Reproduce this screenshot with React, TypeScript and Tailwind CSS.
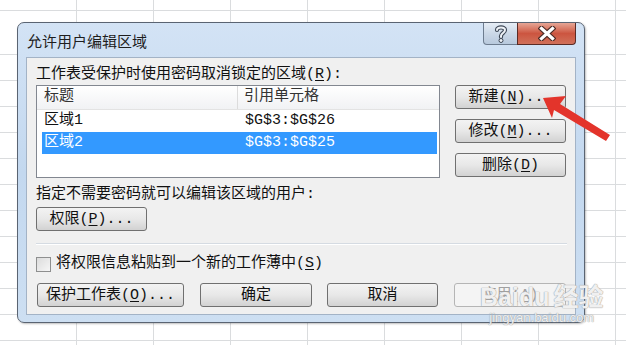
import React from 'react';

const cjk = "font-['Liberation_Mono','Noto_Sans_CJK_SC',monospace]";

function Btn({ children, w, disabled }: { children: React.ReactNode; w: string; disabled?: boolean }) {
  return (
    <div
      className={`${w} h-[24px] shrink-0 rounded-[3px] border flex items-center justify-center text-[15px] leading-none ${
        disabled
          ? 'border-[#b5b5b5] bg-[#f4f4f4] text-[#a0a0a0]'
          : 'border-[#707070] bg-gradient-to-b from-[#f3f3f3] via-[#e8e8e8] to-[#d2d2d2] text-[#111]'
      }`}
    >
      {children}
    </div>
  );
}

const U = ({ c }: { c: string }) => <span className="underline underline-offset-2">{c}</span>;

export default function App() {
  const cols = Array.from({ length: 9 });
  const rows = Array.from({ length: 12 });

  return (
    <div className={`relative w-[626px] h-[345px] overflow-hidden bg-white ${cjk}`}>
      {/* spreadsheet grid behind the dialog */}
      <div className="absolute inset-0 flex">
        {cols.map((_, i) => (
          <div key={i} className="w-[77px] shrink-0 h-full border-r border-[#dadcde]" />
        ))}
      </div>
      <div className="absolute inset-0 flex flex-col">
        <div className="h-[11px] shrink-0 border-b border-[#dadcde]" />
        <div className="h-[44px] shrink-0 border-b border-[#dadcde]" />
        {rows.map((_, i) => (
          <div key={i} className="h-[26px] shrink-0 border-b border-[#dadcde]" />
        ))}
      </div>

      {/* dialog window */}
      <div className="absolute left-[17px] top-[22px] w-[568px] h-[301px] rounded-[7px] border border-[#5a6472] bg-gradient-to-b from-[#d3e3f5] via-[#c3d8ef] to-[#cddff2] flex flex-col shadow-[1px_1px_2px_rgba(0,0,0,0.25)]">
        <div className="relative h-[34px] shrink-0">
          <div className="absolute left-[9px] top-[9px] text-[15px] leading-[18px] text-[#1e1e1e] font-['Noto_Sans_CJK_SC',sans-serif]">
            允许用户编辑区域
          </div>
          <div className="absolute left-[465px] top-0 w-[35px] h-[22px] rounded-bl-[4px] border border-t-0 border-[#6d7c8f] bg-gradient-to-b from-[#e6edf5] via-[#cbd8e7] to-[#b8c9dd] flex items-center justify-center">
            <svg width="14" height="18" viewBox="0 0 14 18">
              <path d="M3 5 C3 1.5 11 1.5 11 5 C11 8 7 8 7 11 L7 12" fill="none" stroke="#3c4654" strokeWidth="4.2" strokeLinecap="round" />
              <path d="M3 5 C3 1.5 11 1.5 11 5 C11 8 7 8 7 11 L7 12" fill="none" stroke="#eef2f7" strokeWidth="2" strokeLinecap="round" />
              <circle cx="7" cy="15.5" r="2" fill="#eef2f7" stroke="#3c4654" strokeWidth="1" />
            </svg>
          </div>
          <div className="absolute left-[499px] top-0 w-[59px] h-[22px] rounded-br-[4px] border border-t-0 border-[#5a2b25] bg-gradient-to-b from-[#e5a595] via-[#cc5540] to-[#d0705a] flex items-center justify-center">
            <svg width="18" height="15" viewBox="0 0 18 15">
              <path d="M3.5 2.5 L14.5 12.5 M14.5 2.5 L3.5 12.5" stroke="#4a2a25" strokeWidth="5.5" strokeLinecap="square" />
              <path d="M3.5 2.5 L14.5 12.5 M14.5 2.5 L3.5 12.5" stroke="#ffffff" strokeWidth="3.2" strokeLinecap="square" />
            </svg>
          </div>
        </div>

        {/* content panel */}
        <div className="flex-1 mx-[8px] mb-[7px] border border-[#a3b3c6] bg-[#f0f0f0] pl-[9px] text-[15px] text-[#111] flex flex-col">
          <div className="mt-[8px] leading-[18px]">
            工作表受保护时使用密码取消锁定的区域(<U c="R" />):
          </div>
          <div className="mt-[1px] flex">
            <div className="w-[404px] h-[93px] shrink-0 border border-[#828790] bg-white flex flex-col">
              <div className="h-[24px] shrink-0 flex border-b border-[#e3e3e3] bg-gradient-to-b from-white to-[#f1f2f4] text-[#333]">
                <div className="w-[201px] border-r border-[#dcdcdc] pl-[7px] flex items-center">标题</div>
                <div className="pl-[6px] flex items-center">引用单元格</div>
              </div>
              <div className="h-[22px] shrink-0 ml-[5px] mr-[2px] flex items-center">
                <div className="w-[196px] pl-[2px]">区域1</div>
                <div className="pl-[7px]">$G$3:$G$26</div>
              </div>
              <div className="h-[22px] shrink-0 ml-[5px] mr-[2px] flex items-center bg-[#3399ff] text-white">
                <div className="w-[196px] pl-[2px]">区域2</div>
                <div className="pl-[7px]">$G$3:$G$25</div>
              </div>
            </div>
            <div className="ml-[15px] flex flex-col gap-[10px]">
              <Btn w="w-[111px]">新建(<U c="N" />)...</Btn>
              <Btn w="w-[111px]">修改(<U c="M" />)...</Btn>
              <Btn w="w-[111px]">删除(<U c="D" />)</Btn>
            </div>
          </div>
          <div className="mt-[8px] leading-[18px]">指定不需要密码就可以编辑该区域的用户:</div>
          <div className="mt-[3px]">
            <Btn w="w-[111px]">权限(<U c="P" />)...</Btn>
          </div>
          <div className="mt-[12px] w-[531px] h-[2px] border-t border-[#d5dbe2] border-b border-b-white" />
          <div className="mt-[10px] h-[18px] flex items-center gap-[5px]">
            <div className="w-[15px] h-[15px] border border-[#8e8f8f] bg-gradient-to-br from-[#dcdcdc] to-[#f6f6f6]" />
            <span className="leading-[18px]">将权限信息粘贴到一个新的工作薄中(<U c="S" />)</span>
          </div>
          <div className="mt-[10px] ml-[1px] flex">
            <Btn w="w-[147px]">保护工作表(<U c="O" />)...</Btn>
            <div className="ml-[16px]"><Btn w="w-[112px]">确定</Btn></div>
            <div className="ml-[15px]"><Btn w="w-[111px]">取消</Btn></div>
            <div className="ml-[16px]"><Btn w="w-[112px]" disabled>应用(<U c="A" />)</Btn></div>
          </div>
        </div>
      </div>

      {/* watermark */}
      <div className="absolute left-[480px] top-[283px] flex flex-col items-center text-white/85 font-['Liberation_Sans','Noto_Sans_CJK_SC',sans-serif] [text-shadow:0_0_1px_#9a9a9a,0_0_1px_#9a9a9a]">
        <div className="text-[25px] leading-[28px] font-bold">Baidu<span className="ml-[4px]">经验</span></div>
        <div className="text-[13px] leading-[14px]">jingyan.baidu.com</div>
      </div>

      {/* red arrow */}
      <svg className="absolute left-0 top-0" width="626" height="345" viewBox="0 0 626 345">
        <polygon points="543,98 566,96 560,104 610,135 606,141 554,110 552,118" fill="#e3342b" />
      </svg>
    </div>
  );
}
